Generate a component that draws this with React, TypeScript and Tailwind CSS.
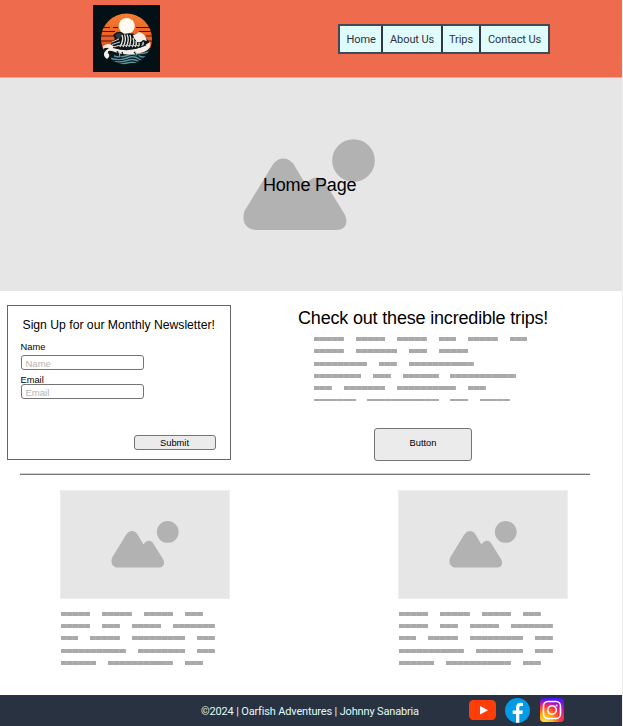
import React from "react";

const sans = "font-['Liberation_Sans',Arial,sans-serif]";
const roboto = "font-[Roboto,sans-serif]";

function Landscape({ className }: { className: string }) {
  return (
    <svg viewBox="0 0 132 92" className={className} fill="#b2b2b2">
      <circle cx="110.5" cy="21.5" r="21.3" />
      <path d="M29 27C34 17.5 45 17 50.5 25L63 46C67 38 76 36 81 42L101.500 75C106 84 102 91 94 91H14C3 91-2 83 1.500 72Z" />
    </svg>
  );
}

function Logo() {
  return (
    <svg viewBox="0 0 67 67" className="ml-[93px] h-[67px] w-[67px]">
      <defs>
        <linearGradient id="sunset" x2="0" y2="1">
          <stop stopColor="#f68a35" />
          <stop offset="1" stopColor="#e94d20" />
        </linearGradient>
        <clipPath id="disc"><circle cx="33.5" cy="34" r="25.5" /></clipPath>
      </defs>
      <rect width="67" height="67" fill="#031016" />
      <g clipPath="url(#disc)">
        <rect width="67" height="46" fill="url(#sunset)" />
        <path d="M8 22.5H17M20 22.500H25M43 22.500H60M8 26.500H22M46 26.500H60M8 31H22M53 31H60M8 36H20M55 36H60" stroke="#3b1b15" strokeWidth="1" />
        <circle cx="33.7" cy="21" r="8" fill="#fffdf2" />
        <path d="M8 43H60V62H8Z" fill="#07191f" />
        <path d="M44 48Q50 50 60 45M21 51Q28 53 34 50.500T46 51T60 48M18 53.500Q27 56 34 53T46 54T60 51M18 56Q28 58 34 55.500T46 56.500T60 54M20 58.500Q28 60 34 58T46 59T58 56" fill="none" stroke="#5c929c" strokeWidth="1.400" />
      </g>
      <path d="M18 42Q18 36 22 34L20 30Q26 24 31 29Q38 27 44 30Q52 30 57 38Q53 43 45 43L24 46Z" fill="#0c1519" />
      <path d="M22 30Q27 26 30 30L25 35Z" fill="#303a40" />
      <path d="M19 37L26 34M19 39.500L27 37M20 42L28 40" stroke="#d8d4ce" strokeWidth="1" />
      <path d="M29 30Q31 35 27 42M31.500 29.500Q34 35 30 42M34 29.500Q37 35 33 42M37 30Q39 35 36 42M40 33Q42 38 39 42M43 36Q44 40 42 42M46 38Q47 40 45 42M50 37Q51 39 48 42" fill="none" stroke="#e9e5de" strokeWidth="1.300" />
      <path d="M40 30Q43 30 46 27Q52 28 54 36L50 35Q48 38 44 37L41 33Z" fill="#f8eee6" />
      <path d="M10 41Q17 36 22 43Q34 48 49 42L57 37Q59 44 51 47Q35 52 22 47Q14 44 15 48Q18 51 14 54Q7 49 16 43Q13 42 10 44Z" fill="#f4eee5" />
      <path d="M20 42.500Q34 47 53 40M24 46L28 53M29 47L30 50M41 47L46 52" fill="none" stroke="#111c20" strokeWidth="1.300" />
      <path d="M24 40.500H46M26 46L27 52M42 46L44 50" fill="none" stroke="#c8c2bb" strokeWidth=".9" />
    </svg>
  );
}

function Words({ lines, clipLast = false }: { lines: number[][]; clipLast?: boolean }) {
  return (
    <div className="flex flex-col">
      {lines.map((line, i) => (
        <div key={i} className={`flex items-start gap-[11.86px] ${i === 2 ? "h-[12.6px]" : "h-[12.3px]"}`}>
          {line.map((count, j) => (
            <div
              key={j}
              className={`bg-[repeating-linear-gradient(90deg,#a9a9a9_0px,#a9a9a9_5.1px,#b3b3b0_5.1px,#b3b3b0_5.93px)] ${clipLast && i === lines.length - 1 ? "h-[2px]" : "h-[4px]"}`}
              style={{ width: count * 5.93 }}
            />
          ))}
        </div>
      ))}
    </div>
  );
}

const introLines = [[5, 5, 5, 3, 5, 3], [5, 7, 3, 5], [9, 3, 11], [8, 3, 6, 11], [3, 7, 10, 3], [7, 12, 3, 5]];
const cardLines = [[5, 5, 5, 3], [5, 3, 5, 7], [3, 5, 9, 3], [11, 8, 3], [6, 11, 3]];

function TripCard() {
  return (
    <article className="w-[170px]">
      <div className="flex h-[109px] w-[170px] border border-[#eeeeee] bg-[#e6e6e6]">
        <Landscape className="ml-[50px] mt-[30px] h-[47px] w-[68px]" />
      </div>
      <div className="pl-[0.5px] pt-[13px]"><Words lines={cardLines} /></div>
    </article>
  );
}

function Field({ label, className }: { label: string; className: string }) {
  return (
    <label className={`block text-[9.3px] leading-[11px] text-black ${className}`}>
      <span className="block">{label}</span>
      <input placeholder={label} className="block h-[15px] w-[123px] rounded-[3px] border border-[#747474] bg-white px-[4px] pt-[2px] text-[9.5px] leading-[11px] placeholder:text-[#b5b5b5]" />
    </label>
  );
}

function YouTube() {
  return <svg width="27" height="20" viewBox="0 0 27 20"><rect width="27" height="20" rx="4.5" fill="#ff3d08" /><path d="M11 6L19 10.3L11 14.5Z" fill="#fff" /></svg>;
}

function Facebook() {
  return <svg width="25" height="25" viewBox="0 0 25 25"><circle cx="12.5" cy="12.5" r="12.5" fill="#039be5" /><path d="M11 24.8V16H7.7V12.5H11V9.8C11 6.4 12.8 4.8 15.7 4.8Q17.3 4.8 18 5V8.1H16C14.6 8.1 14.3 9 14.3 10.3V12.5H17.9L17.4 16H14.3V24.8Z" fill="#fff" /></svg>;
}

function Instagram() {
  return (
    <svg width="24" height="24" viewBox="0 0 24 24">
      <defs>
        <linearGradient id="ig-purple" x2="0" y2="1"><stop stopColor="#3f17ff" /><stop offset=".45" stopColor="#c40bb5" /><stop offset="1" stopColor="#ff304d" /></linearGradient>
        <radialGradient id="ig-warm" cx=".2" cy="1" r=".95"><stop stopColor="#ffe34c" /><stop offset=".35" stopColor="#ffae16" /><stop offset=".68" stopColor="#ff3838" /><stop offset="1" stopColor="#ff168d" stopOpacity="0" /></radialGradient>
      </defs>
      <rect width="24" height="24" rx="4" fill="url(#ig-purple)" /><rect width="24" height="24" rx="4" fill="url(#ig-warm)" />
      <rect x="3.5" y="3.5" width="17" height="17" rx="4.5" fill="none" stroke="#fff" strokeWidth="1.6" />
      <circle cx="12" cy="12" r="4.3" fill="none" stroke="#fff" strokeWidth="1.6" /><circle cx="16.6" cy="7.4" r="1" fill="#fff" />
    </svg>
  );
}

export default function App() {
  return (
    <div className={`h-[726px] w-[623px] overflow-hidden border-r border-[#eeeeee] bg-white text-black ${sans}`}>
      <header className="flex h-[78px] items-start border-b border-[#eda795] bg-[#ee6c4d] pt-[5px]">
        <Logo />
        <nav className={`ml-[178px] mt-[19px] flex h-[30px] divide-x-2 divide-[#303746] border-2 border-[#414856] bg-[#e0fbfc] text-[11px] leading-[27px] tracking-[-0.08px] text-[#293241] ${roboto}`}>
          <a className="w-[43px] pl-[6.5px]">Home</a>
          <a className="w-[60px] pl-[7px]">About Us</a>
          <a className="w-[38px] pl-[6px]">Trips</a>
          <a className="w-[67px] pl-[7px]">Contact Us</a>
        </nav>
      </header>
      <section className="relative h-[213px] bg-[#e6e6e6] pl-[243px] pt-[61px]">
        <Landscape className="h-[92px] w-[132px]" />
        <h1 className="absolute left-[263px] top-[96px] text-[18px] leading-[22px] tracking-[-0.2px] whitespace-nowrap">Home Page</h1>
      </section>
      <main>
        <div className="flex pt-[14px]">
          <form className="ml-[7px] h-[155px] w-[224px] border border-[#666666] pl-[12.5px]">
            <h2 className="pl-[2px] pt-[12px] text-[12.2px] leading-[15px] whitespace-nowrap">Sign Up for our Monthly Newsletter!</h2>
            <Field label="Name" className="mt-[9px] [&>span]:mb-[2px]" />
            <Field label="Email" className="mt-[5px] [&>span]:-mb-[2px]" />
            <button type="button" className="ml-[113px] mt-[36px] block h-[15px] w-[82px] rounded-[3px] border border-[#747474] bg-[#ebebeb] text-[9.3px] leading-[12px]">Submit</button>
          </form>
          <section className="ml-[67px] w-[252px]">
            <h2 className="pt-[2px] text-[18px] leading-[22px] tracking-[-0.18px] whitespace-nowrap">Check out these incredible trips!</h2>
            <div className="pl-[16px] pt-[8px]"><Words lines={introLines} clipLast /></div>
            <button className="ml-[76px] mt-[16.5px] block h-[33px] w-[98px] rounded-[3px] border border-[#747474] bg-[#ebebeb] text-[9.3px]">Button</button>
          </section>
        </div>
        <hr className="ml-[20px] mt-[12.2px] h-[2px] w-[570px] border-0 border-t border-b border-t-[#d0d0d0] border-b-[#777777]" />
        <div className="flex h-[220px] gap-[168px] pl-[60px] pt-[15px]"><TripCard /><TripCard /></div>
      </main>
      <footer className="flex h-[31px] items-start bg-[#293241]">
        <p className={`ml-[201px] w-[268px] pt-[10px] text-[11px] leading-[14px] tracking-[-0.16px] text-[#e0fbfc] whitespace-nowrap ${roboto}`}>©2024 | Oarfish Adventures | Johnny Sanabria</p>
        <div className="flex pt-[3px]">
          <div className="pt-[2px]"><YouTube /></div>
          <div className="ml-[9px]"><Facebook /></div>
          <div className="ml-[10px]"><Instagram /></div>
        </div>
      </footer>
    </div>
  );
}
